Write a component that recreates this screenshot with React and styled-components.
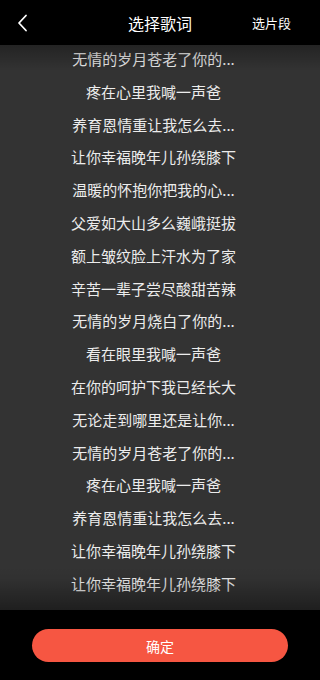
import React from "react";
import styled, { createGlobalStyle } from "styled-components";

const Global = createGlobalStyle`
  html, body { margin: 0; padding: 0; background: #000; }
  body { font-family: "Noto Sans CJK SC", "Noto Sans", sans-serif; }
`;

const Page = styled.div`
  width: 320px;
  height: 680px;
  background: #000;
  display: flex;
  flex-direction: column;
  overflow: hidden;
`;

const Header = styled.div`
  height: 45px;
  flex: none;
  display: grid;
  grid-template-columns: 90px 1fr 90px;
  align-items: center;
  color: #fff;
`;

const Back = styled.button`
  background: none;
  border: 0;
  padding: 0 0 0 16px;
  display: flex;
  align-items: center;
  height: 45px;
`;

const Title = styled.div`
  text-align: center;
  font-size: 16px;
  color: #fff;
`;

const Action = styled.div`
  font-size: 13px;
  text-align: right;
  padding-right: 29px;
  color: #fff;
  white-space: nowrap;
`;

const Lyrics = styled.div`
  position: relative;
  height: 565px;
  flex: none;
  background: #333333;
  overflow: hidden;
  &::before, &::after {
    content: "";
    position: absolute;
    left: 0;
    right: 0;
    pointer-events: none;
  }
  &::before {
    top: 0;
    height: 26px;
    background: linear-gradient(to bottom, rgba(0,0,0,0.3), rgba(0,0,0,0));
  }
  &::after {
    bottom: 0;
    height: 44px;
    background: linear-gradient(to top, rgba(0,0,0,0.4), rgba(0,0,0,0.05) 70%, rgba(0,0,0,0));
  }
`;

const List = styled.div`
  display: flex;
  flex-direction: column;
  margin-top: -2px;
  padding-right: 13px;
`;

const Line = styled.div`
  height: 32.8px;
  line-height: 32.8px;
  text-align: center;
  font-size: 15px;
  color: #ececec;
  white-space: nowrap;
`;

const Footer = styled.div`
  flex: 1;
  display: flex;
  justify-content: center;
  padding-top: 19px;
`;

const Confirm = styled.button`
  width: 256px;
  height: 33px;
  border: 0;
  border-radius: 17px;
  background: #f65642;
  color: #fff;
  font-size: 14px;
  font-family: "Noto Sans CJK SC", "Noto Sans", sans-serif;
`;

const lines = [
  "无情的岁月苍老了你的...",
  "疼在心里我喊一声爸",
  "养育恩情重让我怎么去...",
  "让你幸福晚年儿孙绕膝下",
  "温暖的怀抱你把我的心...",
  "父爱如大山多么巍峨挺拔",
  "额上皱纹脸上汗水为了家",
  "辛苦一辈子尝尽酸甜苦辣",
  "无情的岁月烧白了你的...",
  "看在眼里我喊一声爸",
  "在你的呵护下我已经长大",
  "无论走到哪里还是让你...",
  "无情的岁月苍老了你的...",
  "疼在心里我喊一声爸",
  "养育恩情重让我怎么去...",
  "让你幸福晚年儿孙绕膝下",
  "让你幸福晚年儿孙绕膝下",
];

export default function App() {
  return (
    <Page>
      <Global />
      <Header>
        <Back aria-label="返回">
          <svg width="12" height="18" viewBox="0 0 12 18" fill="none">
            <path d="M10 1.5L3 9l7 7.5" stroke="#fff" strokeWidth="1.8" strokeLinecap="round" strokeLinejoin="round" />
          </svg>
        </Back>
        <Title>选择歌词</Title>
        <Action>选片段</Action>
      </Header>
      <Lyrics>
        <List>
          {lines.map((l, i) => (
            <Line key={i}>{l}</Line>
          ))}
        </List>
      </Lyrics>
      <Footer>
        <Confirm>确定</Confirm>
      </Footer>
    </Page>
  );
}
